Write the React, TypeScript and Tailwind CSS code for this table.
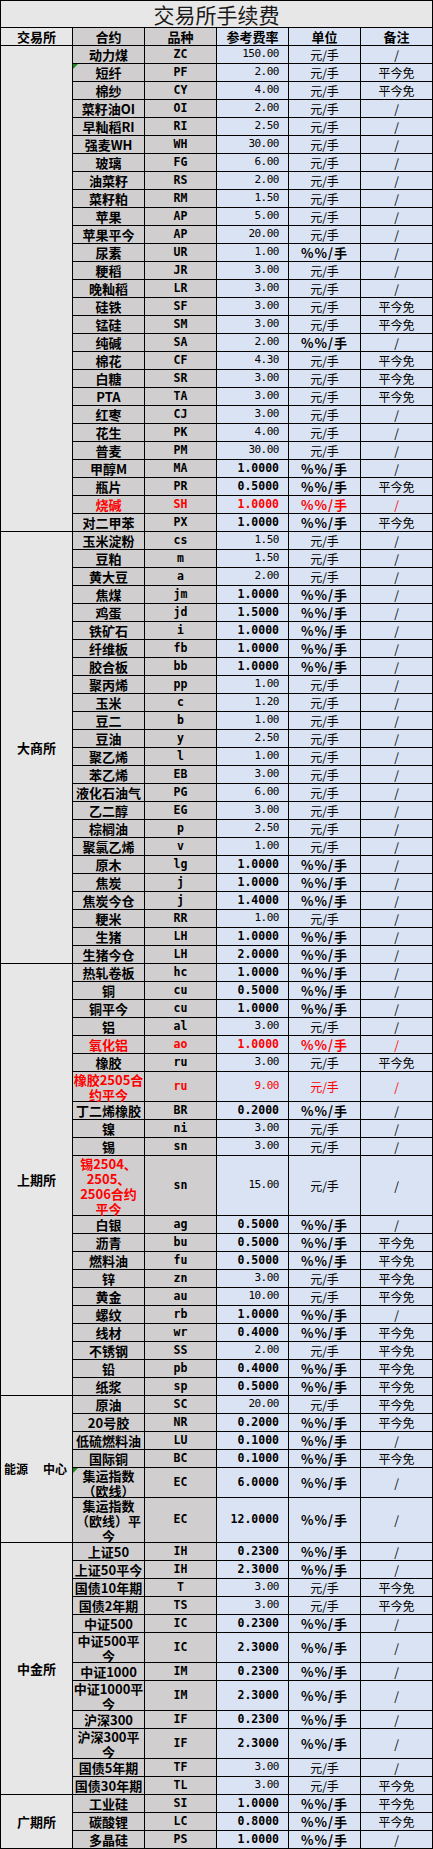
import React from 'react'

type Row = {
  name: string
  code: string
  rate: string
  unit: string
  note: string
  red?: boolean
  redName?: boolean
  lines?: string[]
  mark?: boolean
}

type Section = {
  label: React.ReactNode
  span: string
  rows: Row[]
}

const Y = '元/手'
const P = '%%/手'
const F = '平今免'
const N = '/'

const r = (name: string, code: string, rate: string, unit: string, note: string, extra: Partial<Row> = {}): Row => ({
  name,
  code,
  rate,
  unit,
  note,
  ...extra,
})

const sections: Section[] = [
  {
    label: '',
    span: 'row-span-27',
    rows: [
      r('动力煤', 'ZC', '150.00', Y, N),
      r('短纤', 'PF', '2.00', Y, F, { mark: true }),
      r('棉纱', 'CY', '4.00', Y, F),
      r('菜籽油OI', 'OI', '2.00', Y, N),
      r('早籼稻RI', 'RI', '2.50', Y, N),
      r('强麦WH', 'WH', '30.00', Y, N),
      r('玻璃', 'FG', '6.00', Y, N),
      r('油菜籽', 'RS', '2.00', Y, N),
      r('菜籽粕', 'RM', '1.50', Y, N),
      r('苹果', 'AP', '5.00', Y, N),
      r('苹果平今', 'AP', '20.00', Y, N),
      r('尿素', 'UR', '1.00', P, N),
      r('粳稻', 'JR', '3.00', Y, N),
      r('晚籼稻', 'LR', '3.00', Y, N),
      r('硅铁', 'SF', '3.00', Y, F),
      r('锰硅', 'SM', '3.00', Y, F),
      r('纯碱', 'SA', '2.00', P, N),
      r('棉花', 'CF', '4.30', Y, F),
      r('白糖', 'SR', '3.00', Y, F),
      r('PTA', 'TA', '3.00', Y, F),
      r('红枣', 'CJ', '3.00', Y, N),
      r('花生', 'PK', '4.00', Y, N),
      r('普麦', 'PM', '30.00', Y, N),
      r('甲醇M', 'MA', '1.0000', P, N),
      r('瓶片', 'PR', '0.5000', P, F),
      r('烧碱', 'SH', '1.0000', P, N, { red: true }),
      r('对二甲苯', 'PX', '1.0000', P, F),
    ],
  },
  {
    label: '大商所',
    span: 'row-span-24',
    rows: [
      r('玉米淀粉', 'cs', '1.50', Y, N),
      r('豆粕', 'm', '1.50', Y, N),
      r('黄大豆', 'a', '2.00', Y, N),
      r('焦煤', 'jm', '1.0000', P, N),
      r('鸡蛋', 'jd', '1.5000', P, N),
      r('铁矿石', 'i', '1.0000', P, N),
      r('纤维板', 'fb', '1.0000', P, N),
      r('胶合板', 'bb', '1.0000', P, N),
      r('聚丙烯', 'pp', '1.00', Y, N),
      r('玉米', 'c', '1.20', Y, N),
      r('豆二', 'b', '1.00', Y, N),
      r('豆油', 'y', '2.50', Y, N),
      r('聚乙烯', 'l', '1.00', Y, N),
      r('苯乙烯', 'EB', '3.00', Y, N),
      r('液化石油气', 'PG', '6.00', Y, N),
      r('乙二醇', 'EG', '3.00', Y, N),
      r('棕榈油', 'p', '2.50', Y, N),
      r('聚氯乙烯', 'v', '1.00', Y, N),
      r('原木', 'lg', '1.0000', P, N),
      r('焦炭', 'j', '1.0000', P, N),
      r('焦炭今仓', 'j', '1.4000', P, N),
      r('粳米', 'RR', '1.00', Y, N),
      r('生猪', 'LH', '1.0000', P, N),
      r('生猪今仓', 'LH', '2.0000', P, N),
    ],
  },
  {
    label: '上期所',
    span: 'row-span-21',
    rows: [
      r('热轧卷板', 'hc', '1.0000', P, N),
      r('铜', 'cu', '0.5000', P, N),
      r('铜平今', 'cu', '1.0000', P, N),
      r('铝', 'al', '3.00', Y, N),
      r('氧化铝', 'ao', '1.0000', P, N, { red: true }),
      r('橡胶', 'ru', '3.00', Y, F),
      r('橡胶2505合约平今', 'ru', '9.00', Y, N, { red: true, lines: ['橡胶2505合', '约平今'] }),
      r('丁二烯橡胶', 'BR', '0.2000', P, N),
      r('镍', 'ni', '3.00', Y, N),
      r('锡', 'sn', '3.00', Y, N),
      r('锡2504、2505、2506合约平今', 'sn', '15.00', Y, N, {
        redName: true,
        lines: ['锡2504、', '2505、', '2506合约', '平今'],
      }),
      r('白银', 'ag', '0.5000', P, N),
      r('沥青', 'bu', '0.5000', P, F),
      r('燃料油', 'fu', '0.5000', P, F),
      r('锌', 'zn', '3.00', Y, F),
      r('黄金', 'au', '10.00', Y, F),
      r('螺纹', 'rb', '1.0000', P, N),
      r('线材', 'wr', '0.4000', P, F),
      r('不锈钢', 'SS', '2.00', Y, F),
      r('铅', 'pb', '0.4000', P, F),
      r('纸浆', 'sp', '0.5000', P, F),
    ],
  },
  {
    label: (
      <span className="flex w-full gap-[15px] whitespace-nowrap pl-[3px] text-[12px]">
        <span>能源</span>
        <span>中心</span>
      </span>
    ),
    span: 'row-span-6',
    rows: [
      r('原油', 'SC', '20.00', Y, F),
      r('20号胶', 'NR', '0.2000', P, F),
      r('低硫燃料油', 'LU', '0.1000', P, N),
      r('国际铜', 'BC', '0.1000', P, F),
      r('集运指数（欧线）', 'EC', '6.0000', P, N, { lines: ['集运指数', '（欧线）'], mark: true }),
      r('集运指数（欧线）平今', 'EC', '12.0000', P, N, { lines: ['集运指数', '（欧线）平', '今'] }),
    ],
  },
  {
    label: '中金所',
    span: 'row-span-12',
    rows: [
      r('上证50', 'IH', '0.2300', P, N),
      r('上证50平今', 'IH', '2.3000', P, N),
      r('国债10年期', 'T', '3.00', Y, F),
      r('国债2年期', 'TS', '3.00', Y, F),
      r('中证500', 'IC', '0.2300', P, N),
      r('中证500平今', 'IC', '2.3000', P, N, { lines: ['中证500平', '今'] }),
      r('中证1000', 'IM', '0.2300', P, N),
      r('中证1000平今', 'IM', '2.3000', P, N, { lines: ['中证1000平', '今'] }),
      r('沪深300', 'IF', '0.2300', P, N),
      r('沪深300平今', 'IF', '2.3000', P, N, { lines: ['沪深300平', '今'] }),
      r('国债5年期', 'TF', '3.00', Y, N),
      r('国债30年期', 'TL', '3.00', Y, F),
    ],
  },
  {
    label: '广期所',
    span: 'row-span-3',
    rows: [
      r('工业硅', 'SI', '1.0000', P, F),
      r('碳酸锂', 'LC', '0.8000', P, F),
      r('多晶硅', 'PS', '1.0000', P, N),
    ],
  },
]

const heights: Record<number, string> = {
  1: 'h-[17px]',
  2: 'h-[29px]',
  3: 'h-[44px]',
  4: 'h-[59px]',
}

const gray = 'bg-[#d0cece]'
const blue = 'bg-[#dae3f3]'
const light = 'bg-[#e8e7e7]'
const mono = "font-['DejaVu_Sans_Mono','Liberation_Mono',monospace]"

function DataRow({ row }: { row: Row }) {
  const lines = row.lines ?? [row.name]
  const h = heights[lines.length]
  const color = row.red ? 'text-[#ff0000]' : 'text-black'
  const nameColor = row.red || row.redName ? 'text-[#ff0000]' : 'text-black'
  const boldRate = row.rate.split('.')[1].length === 4
  const pct = row.unit === P

  return (
    <>
      <div
        className={`relative ${h} ${gray} ${nameColor} flex flex-col items-center justify-center text-center text-[13px] font-bold leading-[15px]`}
      >
        {row.mark && (
          <span className="absolute left-0 top-0 h-0 w-0 border-t-[5px] border-r-[5px] border-t-[#1e8a1e] border-r-transparent" />
        )}
        {lines.map((l) => (
          <span key={l} className="whitespace-nowrap">
            {l}
          </span>
        ))}
      </div>
      <div className={`${h} ${gray} ${color} ${mono} flex items-center justify-center text-[11.5px] font-bold`}>
        {row.code}
      </div>
      <div
        className={`${h} ${blue} ${color} ${mono} flex items-center justify-end pr-[9px] ${
          boldRate ? 'text-[11.5px] font-bold' : 'text-[11px] tracking-[-0.5px]'
        }`}
      >
        {row.rate}
      </div>
      <div
        className={`${h} ${blue} ${color} flex items-center justify-center ${
          pct ? 'text-[13px] font-bold tracking-[1px]' : 'text-[12px]'
        }`}
      >
        {row.unit}
      </div>
      <div className={`${h} ${blue} ${color} flex items-center justify-center text-[12px]`}>{row.note}</div>
    </>
  )
}

export default function App() {
  return (
    <main className="bg-white font-['Noto_Sans_CJK_SC',sans-serif] text-black">
      <div className="grid w-[433px] grid-cols-[repeat(6,71px)] gap-px bg-black p-px">
        <div className={`col-span-6 h-[26px] ${light} flex items-center justify-center text-[21px] leading-none text-[#1a1a1a]`}>
          交易所手续费
        </div>

        <div className={`h-[17px] ${light} flex items-center justify-center text-[13px] font-bold`}>交易所</div>
        <div className={`h-[17px] ${gray} flex items-center justify-center text-[13px] font-bold`}>合约</div>
        <div className={`h-[17px] ${gray} flex items-center justify-center text-[13px] font-bold`}>品种</div>
        <div className={`h-[17px] ${blue} flex items-center justify-center text-[13px] font-bold`}>参考费率</div>
        <div className={`h-[17px] ${blue} flex items-center justify-center text-[13px] font-bold`}>单位</div>
        <div className={`h-[17px] ${blue} flex items-center justify-center text-[13px] font-bold`}>备注</div>

        {sections.map((s, i) => (
          <React.Fragment key={i}>
            <div className={`${s.span} ${light} flex items-center justify-center text-[13px] font-bold`}>
              {s.label}
            </div>
            {s.rows.map((row, j) => (
              <DataRow key={j} row={row} />
            ))}
          </React.Fragment>
        ))}
      </div>
    </main>
  )
}
